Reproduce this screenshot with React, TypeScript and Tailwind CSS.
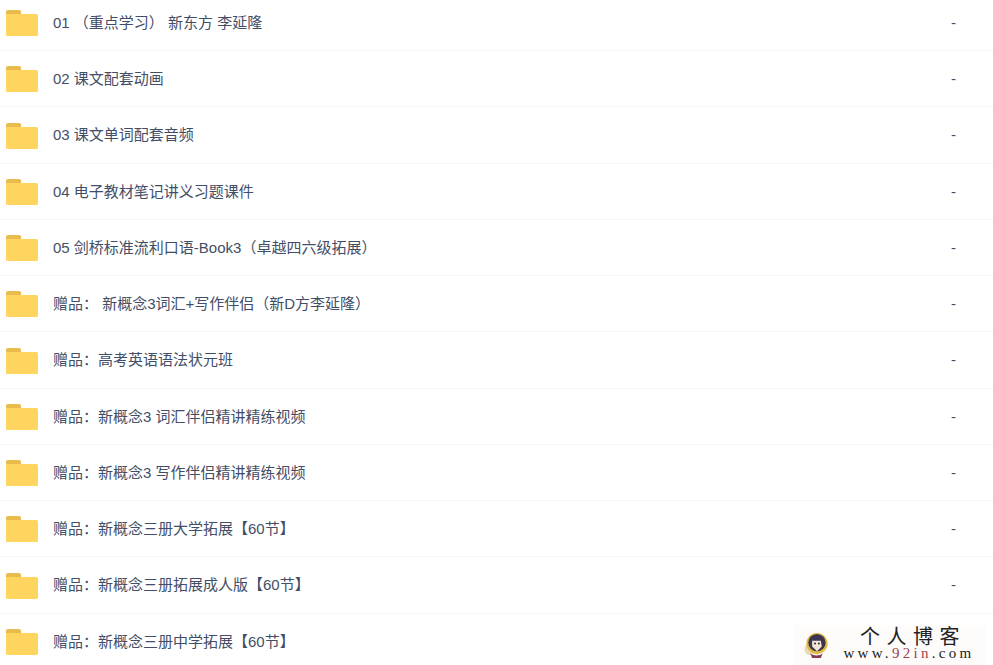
const rows = [
  '01 （重点学习） 新东方 李延隆',
  '02 课文配套动画',
  '03 课文单词配套音频',
  '04 电子教材笔记讲义习题课件',
  '05 剑桥标准流利口语-Book3（卓越四六级拓展）',
  '赠品： 新概念3词汇+写作伴侣（新D方李延隆）',
  '赠品：高考英语语法状元班',
  '赠品：新概念3 词汇伴侣精讲精练视频',
  '赠品：新概念3 写作伴侣精讲精练视频',
  '赠品：新概念三册大学拓展【60节】',
  '赠品：新概念三册拓展成人版【60节】',
  '赠品：新概念三册中学拓展【60节】',
];

function FolderIcon() {
  return (
    <svg width="32" height="26" viewBox="0 0 32 26" className="shrink-0">
      <path d="M0 2a2 2 0 0 1 2-2h11a2 2 0 0 1 2 2v3H0z" fill="#e8bb4f" />
      <path d="M0 4h30.500a1.500 1.500 0 0 1 1.500 1.500V24.500a1.500 1.500 0 0 1-1.500 1.500H1.500A1.500 1.500 0 0 1 0 24.500z" fill="#ffd55f" />
    </svg>
  );
}

function Avatar() {
  return (
    <svg width="26" height="27" viewBox="0 0 26 28" className="shrink-0">
      <circle cx="7" cy="18" r="6" fill="#e8d9b8" />
      <circle cx="14" cy="12" r="11" fill="#e2b93c" />
      <circle cx="14" cy="11" r="9" fill="#3c3550" />
      <path d="M9 9h9l1 6-5 5-5-5z" fill="#f3e6d6" />
      <path d="M7 22c3 3 10 3 13 0l-2 5h-9z" fill="#8a3a4a" />
      <circle cx="12" cy="12" r="1" fill="#222" />
      <circle cx="16" cy="12" r="1" fill="#222" />
    </svg>
  );
}

export default function App() {
  return (
    <div className="relative h-[665px] w-[993px] overflow-hidden bg-white font-['Liberation_Sans','Noto_Sans_CJK_SC',sans-serif] text-[15px] text-[#424e67]">
      <div className="-mt-[5.300px]">
        {rows.map((name, i) => (
          <div key={name} className="flex h-[56.270px] items-center border-b border-[#f2f6fd] pl-[6px] pt-[1.500px]">
            <FolderIcon />
            <span className="ml-[15px] flex-1 whitespace-pre">{name}</span>
            <span className="w-[42px]">{i < rows.length - 1 ? '-' : ''}</span>
          </div>
        ))}
      </div>
      <div className="absolute bottom-0 right-[8px] flex h-[40px] w-[190px] items-center gap-[13px] bg-[#fdfcfb] pl-[8px]">
        <Avatar />
        <div className="flex w-[134px] flex-col items-center pb-[6px] text-[#222]">
          <span className="whitespace-nowrap pl-[8px] font-['Noto_Sans_CJK_SC',sans-serif] text-[20px] leading-[21px] tracking-[6.500px]">个人博客</span>
          <span className="whitespace-nowrap font-['Liberation_Serif',serif] text-[15px] leading-[14px] tracking-[3.300px]">
            www.<span className="text-[#a5404a]">92in</span>.com
          </span>
        </div>
      </div>
    </div>
  );
}
